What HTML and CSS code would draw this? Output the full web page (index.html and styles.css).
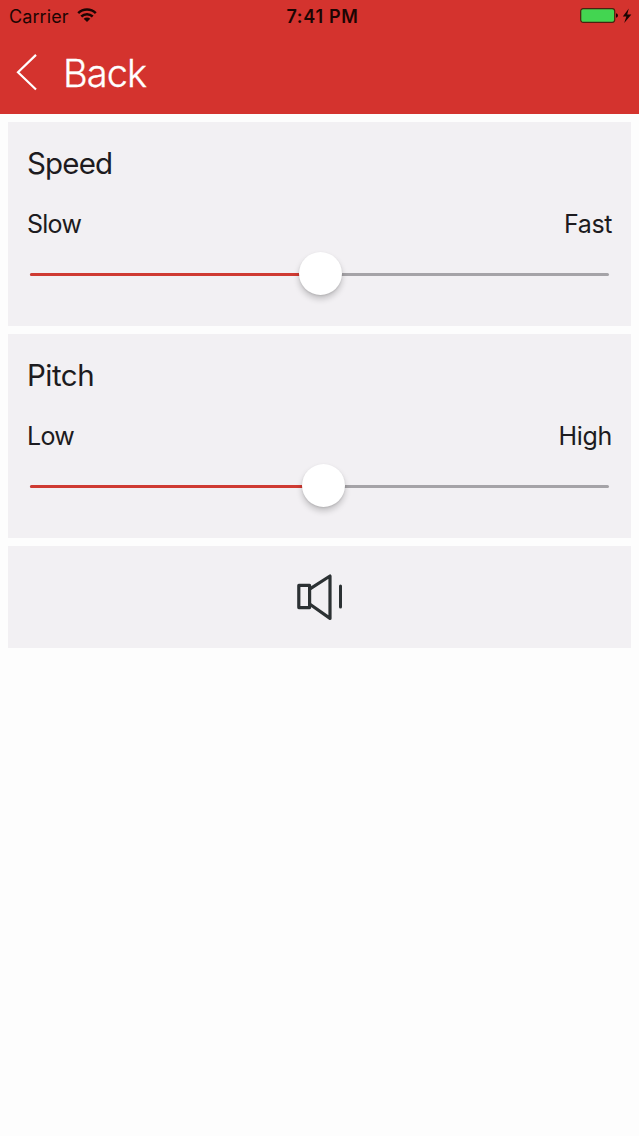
FILE: index.html
```html
<!DOCTYPE html>
<html lang="en">
<head>
<meta charset="utf-8">
<title>Voice settings</title>
<link rel="stylesheet" href="styles.css">
</head>
<body>
<header class="header">
  <div class="status">
    <div class="status-left">
      <span class="carrier">Carrier</span>
      <svg class="wifi" width="20" height="15" viewBox="0 0 20 15" fill="none" stroke="#1c0503" stroke-width="2.5">
        <path d="M1.2 5.1a12.7 12.7 0 0 1 17.6 0"/>
        <path d="M4.3 8.5a8.2 8.2 0 0 1 11.4 0"/>
        <path d="M10 14.1L6.7 10.8a4.7 4.7 0 0 1 6.6 0z" fill="#1c0503" stroke="none"/>
      </svg>
    </div>
    <span class="time">7:41 PM</span>
    <div class="status-right">
      <svg class="battery" width="52" height="18" viewBox="0 0 52 18">
        <rect x=".7" y="1.7" width="34" height="13.6" rx="2.5" fill="#43d551" stroke="#4a2210" stroke-width="1.2"/>
        <path d="M36 6.2q2 .5 2 2.3t-2 2.3z" fill="#1c0503"/>
        <path d="M48.8 1.5L42.8 9.4h3.6L44.2 16l7.2-8.6h-4.2z" fill="#1c0503"/>
      </svg>
    </div>
  </div>
  <nav class="nav">
    <svg class="chevron" width="22" height="38" viewBox="0 0 22 38" fill="none" stroke="#fff" stroke-width="2.2">
      <path d="M20 1.9L2 19.3L20 36.5"/>
    </svg>
    <span class="back">Back</span>
  </nav>
</header>
<main class="cards">
  <section class="card">
    <h2 class="title speed">Speed</h2>
    <div class="labels"><span class="slow">Slow</span><span class="fast">Fast</span></div>
    <div class="slider"><div class="fill fill-speed"></div><div class="knob knob-speed"></div></div>
  </section>
  <section class="card">
    <h2 class="title pitch">Pitch</h2>
    <div class="labels"><span class="low">Low</span><span class="high">High</span></div>
    <div class="slider"><div class="fill fill-pitch"></div><div class="knob knob-pitch"></div></div>
  </section>
  <section class="card play">
    <svg width="48" height="48" viewBox="0 0 48 48" fill="none" stroke="#2c3133" stroke-width="3.2" stroke-linejoin="round" stroke-linecap="round">
      <path d="M2.8 12.4h10.8v22.2H2.8z"/>
      <path d="M13.6 16.2L34 3v42.4L13.6 31"/>
      <path d="M44.5 13v21" stroke-width="3"/>
    </svg>
  </section>
</main>
</body>
</html>
```
FILE: styles.css
```css
* { box-sizing: border-box; }
body {
  margin: 0;
  min-height: 1136px;
  background: #fdfdfd;
  color: #1d1b20;
  font-family: Inter, "Liberation Sans", sans-serif;
}
.header { height: 113.5px; background: #d4332e; }
.status {
  display: grid;
  grid-template-columns: 1fr auto 1fr;
  align-items: center;
  height: 32px;
  padding: 0 7px 0 9px;
  color: #1c0503;
  font-size: 18px;
  line-height: 33px;
}
.status-left { display: flex; align-items: center; gap: 8px; }
.carrier { letter-spacing: .1px; }
.wifi { margin-bottom: 3px; }
.time { padding-left: 4px; font-weight: 600; letter-spacing: .7px; }
.status-right { display: flex; justify-content: flex-end; }
.battery { margin-bottom: 2px; }
.nav { display: flex; align-items: center; height: 82px; padding-left: 16px; }
.chevron { margin-bottom: 2px; }
.back { margin-left: 25px; color: #fff; font-size: 38px; font-weight: 300; letter-spacing: -.9px; line-height: 82px; -webkit-text-stroke: .3px #fff; }
.cards { display: flex; flex-direction: column; gap: 8px; padding: 8.5px 8px 0; }
.card { height: 204px; padding: 19px 19px 0; background: #f2f0f3; }
.title { margin: 0; height: 45px; font-size: 29.5px; font-weight: 400; line-height: 44px; }
.speed { letter-spacing: -.85px; }
.pitch { letter-spacing: -.5px; }
.labels { display: flex; justify-content: space-between; height: 36px; margin-top: 20px; font-size: 25px; line-height: 36px; }
.slow, .low { letter-spacing: -.75px; }
.fast { letter-spacing: -.4px; }
.high { letter-spacing: -.3px; }
.slider { position: relative; height: 3px; margin: 31px 3px 0; border-radius: 2px; background: #a5a3a7; }
.fill { height: 3px; border-radius: 2px; background: #cf3a32; }
.fill-speed { width: 290px; }
.fill-pitch { width: 293px; }
.knob {
  position: absolute;
  top: -21.5px;
  width: 43px;
  height: 43px;
  border-radius: 50%;
  background: #fff;
  box-shadow: 0 4px 6px rgba(0, 0, 0, .2), 0 1px 2px rgba(0, 0, 0, .1);
}
.knob-speed { left: 269px; }
.knob-pitch { left: 272px; }
.play { display: flex; justify-content: center; align-items: center; height: 102px; padding: 0; }
```
